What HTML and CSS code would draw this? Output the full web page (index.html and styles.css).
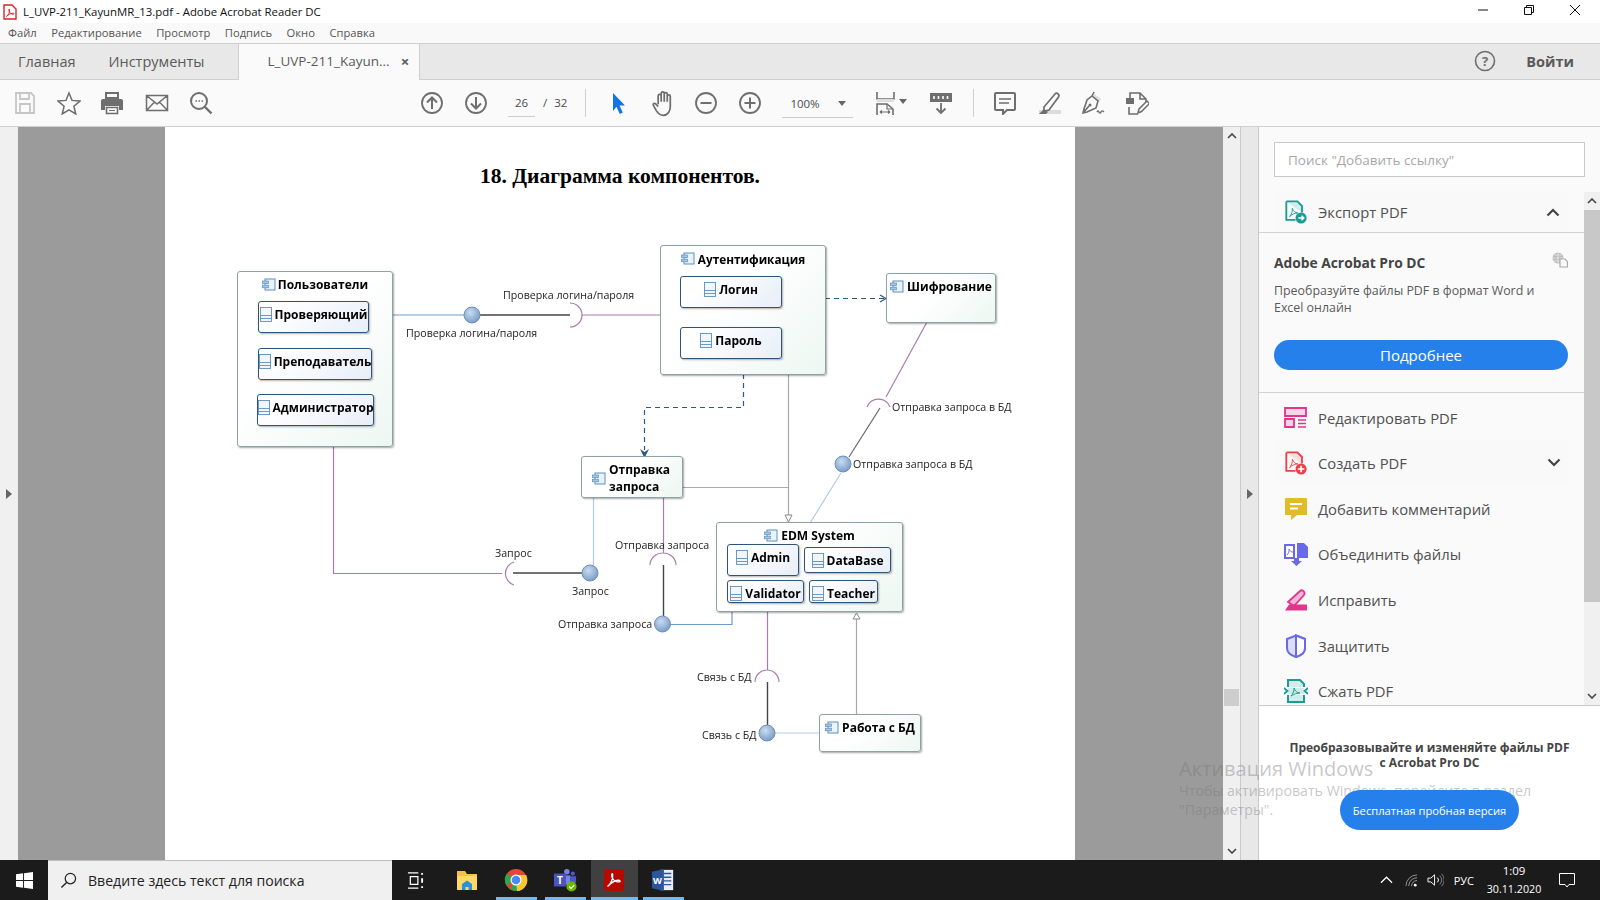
FILE: index.html
```html
<!DOCTYPE html>
<html lang="ru">
<head>
    <meta charset="UTF-8">
    <title>L_UVP-211_KayunMR_13.pdf - Adobe Acrobat Reader DC</title>
    <link rel="stylesheet" href="styles.css">
</head>
<body>
    <svg class="defs" width="0" height="0">
        <defs>
            <symbol id="comp" viewBox="0 0 14 13">
                <rect x="3" y="1" width="10" height="11" fill="#eaf2fa" stroke="#5d90c0"/>
                <rect x="0.5" y="3" width="6" height="2.6" fill="#a9c7e3" stroke="#5d90c0" stroke-width=".7"/>
                <rect x="0.5" y="7.2" width="6" height="2.6" fill="#a9c7e3" stroke="#5d90c0" stroke-width=".7"/>
            </symbol>
            <symbol id="cls" viewBox="0 0 12 15">
                <rect x="0.5" y="0.5" width="11" height="14" fill="#f2f6fb" stroke="#5c8fc2" stroke-width=".9"/>
                <path d="M.5 8.5h11M.5 11.5h11" stroke="#5c8fc2" stroke-width=".9" fill="none"/>
            </symbol>
            <radialGradient id="ball" cx=".4" cy=".35" r=".75">
                <stop offset="0" stop-color="#cbdcef"/>
                <stop offset="1" stop-color="#6d94c3"/>
            </radialGradient>
        </defs>
    </svg>

    <div class="titlebar">
        <svg class="title-icon" viewBox="0 0 14 16"><path d="M1 1h8l4 4v10H1z" fill="#fff" stroke="#d8232a" stroke-width="1.4"/><path d="M3.5 12.5c2-1.5 3.500-4.5 3-7-.3-1.2-1 0-.5 1.5.7 2 2.500 3.500 4.500 3.200 1-.3.3-1.200-1-1-2.500.2-4.500 1.800-6 3.300z" fill="none" stroke="#d8232a"/></svg>
        <span class="title-text">L_UVP-211_KayunMR_13.pdf - Adobe Acrobat Reader DC</span>
        <div class="win-btns">
            <svg class="win-btn" viewBox="0 0 12 12"><path d="M1 6h10" stroke="#111"/></svg>
            <svg class="win-btn" viewBox="0 0 12 12"><path d="M1.5 3.5h7v7h-7zM3.5 3.5v-2h7v7h-2" fill="none" stroke="#111"/></svg>
            <svg class="win-btn" viewBox="0 0 12 12"><path d="M1 1l10 10M11 1L1 11" stroke="#111"/></svg>
        </div>
    </div>

    <div class="menubar">
        <span>Файл</span>
        <span>Редактирование</span>
        <span>Просмотр</span>
        <span>Подпись</span>
        <span>Окно</span>
        <span>Справка</span>
    </div>

    <div class="tabbar">
        <span class="tab-home">Главная</span>
        <span class="tab-tools">Инструменты</span>
        <div class="tab-doc">
            <span>L_UVP-211_Kayun...</span>
            <span class="tab-close">×</span>
        </div>
        <svg class="help-icon" viewBox="0 0 22 22"><circle cx="11" cy="11" r="9.5" fill="none" stroke="#6e6e6e" stroke-width="1.6"/><text x="11" y="15.5" text-anchor="middle" class="help-mark">?</text></svg>
        <span class="login">Войти</span>
    </div>

    <div class="toolbar">
        <button class="tb-btn tb-first"><svg viewBox="0 0 24 24"><path d="M3 2h15l3 3v17H3zM7 2v6h9V2M7 22v-9h10v9" fill="none" stroke="#c6c6c6" stroke-width="1.8"/></svg></button>
        <button class="tb-btn"><svg viewBox="0 0 24 24"><path d="M12 2l3 7.4 8 .6-6.1 5.200 1.900 7.800L12 18.800 5.200 23l1.900-7.800L1 10l8-.6z" fill="none" stroke="#6e6e6e" stroke-width="1.5"/></svg></button>
        <button class="tb-btn tb-print"><svg viewBox="0 0 24 24"><path d="M6 2h12v5H6z" fill="none" stroke="#6e6e6e" stroke-width="2"/><path d="M3 8h18a2 2 0 0 1 2 2v9h-4v-4H5v4H1v-9a2 2 0 0 1 2-2z" fill="#6e6e6e"/><path d="M6.500 16.500h11v6h-11z" fill="none" stroke="#6e6e6e" stroke-width="1.6"/><path d="M9 19.500h6" stroke="#6e6e6e"/></svg></button>
        <button class="tb-btn"><svg viewBox="0 0 24 24"><path d="M1.500 4.500h21v15h-21zM1.500 4.500L12 13l10.500-8.500M1.500 19.500l8-8.500M22.500 19.500l-8-8.500" fill="none" stroke="#6e6e6e" stroke-width="1.5"/></svg></button>
        <button class="tb-btn"><svg viewBox="0 0 24 24"><circle cx="10" cy="10" r="8" fill="none" stroke="#6e6e6e" stroke-width="2"/><path d="M16 16l6.500 6.500" stroke="#6e6e6e" stroke-width="2.4"/><path d="M6.500 10h1.500M9.500 10H11M12.500 10H14" stroke="#6e6e6e" stroke-width="1.6"/></svg></button>

        <button class="tb-btn tb-nav"><svg viewBox="0 0 24 24"><circle cx="12" cy="12" r="10" fill="none" stroke="#6e6e6e" stroke-width="1.8"/><path d="M12 18V6.500M7 11.500l5-5 5 5" fill="none" stroke="#6e6e6e" stroke-width="2"/></svg></button>
        <button class="tb-btn"><svg viewBox="0 0 24 24"><circle cx="12" cy="12" r="10" fill="none" stroke="#6e6e6e" stroke-width="1.8"/><path d="M12 6v11.500M7 12.500l5 5 5-5" fill="none" stroke="#6e6e6e" stroke-width="2"/></svg></button>
        <span class="page-num">26</span>
        <span class="page-of">/</span>
        <span class="page-total">32</span>
        <span class="tb-sep tb-sep-a"></span>

        <button class="tb-btn tb-cursor"><svg viewBox="0 0 24 24"><path d="M7 2l12 12.500h-5.500l3.300 7-3 1.500-3.300-7.200L7 20z" fill="#1473e6"/></svg></button>
        <button class="tb-btn tb-hand"><svg viewBox="0 0 24 24"><path d="M7 13V6a1.300 1.300 0 0 1 2.600 0v5M9.600 11V3.800a1.300 1.300 0 0 1 2.600 0V11M12.200 11V4.400a1.300 1.300 0 0 1 2.600 0V11M14.800 11V6.400a1.300 1.300 0 0 1 2.600 0V15c0 4.500-2.500 7.500-6 7.500-3 0-4.500-1.500-6-4L2.900 14c-.7-1.300 1-2.300 2-1.200L7 15" fill="none" stroke="#6e6e6e" stroke-width="1.5"/></svg></button>
        <button class="tb-btn"><svg viewBox="0 0 24 24"><circle cx="12" cy="12" r="10" fill="none" stroke="#6e6e6e" stroke-width="1.8"/><path d="M6.500 12h11" stroke="#6e6e6e" stroke-width="2"/></svg></button>
        <button class="tb-btn"><svg viewBox="0 0 24 24"><circle cx="12" cy="12" r="10" fill="none" stroke="#6e6e6e" stroke-width="1.8"/><path d="M6.500 12h11M12 6.500v11" stroke="#6e6e6e" stroke-width="2"/></svg></button>
        <div class="zoom-select">
            <span>100%</span>
            <span class="caret"></span>
        </div>

        <button class="tb-btn tb-fit"><svg viewBox="0 0 24 24"><path d="M1 1v7h17V1" fill="none" stroke="#6e6e6e" stroke-width="1.6"/><path d="M1 8h17v3H1z" fill="#ddd"/><path d="M1 24V13h10l6 5v6" fill="none" stroke="#6e6e6e" stroke-width="1.6"/><path d="M11 13v5h6M4 21h10M4 21l2-1.500M4 21l2 1.500M14 21l-2-1.500M14 21l-2 1.500" fill="none" stroke="#6e6e6e" stroke-width="1.2"/></svg><span class="caret caret-fit"></span></button>
        <button class="tb-btn tb-read"><svg viewBox="0 0 24 24"><path d="M1 2h22v9H1z" fill="#6e6e6e"/><path d="M5 5v3M9.500 5v3M14 5v3M18.500 5v3" stroke="#fff" stroke-width="1.6"/><path d="M12 12v10M7.500 17.500l4.500 4.500 4.500-4.500" fill="none" stroke="#6e6e6e" stroke-width="1.8"/></svg></button>
        <span class="tb-sep tb-sep-b"></span>

        <button class="tb-btn tb-comment"><svg viewBox="0 0 24 24"><path d="M3 2h18a1 1 0 0 1 1 1v15a1 1 0 0 1-1 1h-7l-4 4v-4H3a1 1 0 0 1-1-1V3a1 1 0 0 1 1-1z" fill="none" stroke="#6e6e6e" stroke-width="2"/><path d="M6 8h12M6 12h10" stroke="#6e6e6e" stroke-width="1.5"/></svg></button>
        <button class="tb-btn"><svg viewBox="0 0 24 24"><path d="M2 19h22v4H2z" fill="#dcdcdc"/><path d="M7 16L18 3c2-2 5 .5 3.500 3L12 19l-5 1z" fill="none" stroke="#6e6e6e" stroke-width="1.7"/><path d="M2 23l5-5 4 3-2 2z" fill="#6e6e6e"/></svg></button>
        <button class="tb-btn"><svg viewBox="0 0 24 24"><path d="M13 3l7 5-2 3-7-5z" fill="#dcdcdc"/><path d="M11 5l6 5-2 7-9 4-4 1 1-4 3-9zM2 22l6-7M13 1l-2 4" fill="none" stroke="#6e6e6e" stroke-width="1.6"/><circle cx="9" cy="14" r="1.500" fill="#6e6e6e"/><path d="M16 21c1-1.500 1.500-1.500 2 0s1.500 1.500 2 0 1.500-1.500 3 0" fill="none" stroke="#6e6e6e" stroke-width="1.4"/></svg></button>
        <button class="tb-btn"><svg viewBox="0 0 24 24"><path d="M1 7h8v6H1z" fill="#6e6e6e"/><path d="M5 7V2h10l6 6v4M15 2v6h6M4 16v7h9" fill="none" stroke="#6e6e6e" stroke-width="1.6"/><path d="M13 22l1-4 8-8 2.500 2.500-8 8z" fill="#fafafa" stroke="#6e6e6e" stroke-width="1.5"/></svg></button>
    </div>

    <div class="main">
        <div class="side-strip"><span class="arrow-right"></span></div>

        <div class="viewer">
            <div class="page">
                <h1 class="page-title">18. Диаграмма компонентов.</h1>
                <div class="diagram">
                    <svg class="wires" viewBox="0 0 800 530" width="800" height="530">
                        <g transform="translate(-225,-240)" fill="none">
                            <path class="w-blue" d="M393 315H465M670 624.500H732V612"/>
                            <path class="w-blue-light" d="M593.500 498V566M841 473L810 523M775 733H819"/>
                            <path class="w-black" d="M480 315H570M513 573H583M663.500 565V616M767.500 682V725"/>
                            <path class="w-black-thin" d="M880 408L849 457"/>
                            <path class="w-magenta" d="M570 303A12 12 0 0 1 570 327M582 315H661M333.500 447V573.500H502M514 562A12 12 0 0 0 514 585M663.500 498V553M650 565A13 12 0 0 1 676 565M767.500 612V670M755 682A12 12 0 0 1 779 682"/>
                            <path class="w-magenta" d="M927 322L886 397M867 407A12 11 0 0 1 890 407"/>
                            <path class="w-grey" d="M788.500 374V515M683 487.500H788M856.500 714V619"/>
                            <path class="w-grey-tip" d="M785 515L788.500 522L792 515ZM853 619L856.500 613L860 619Z"/>
                            <path class="w-dash" d="M825 298.500H886M743.500 374V407.500H644.500V450"/>
                            <path class="w-dash-tip" d="M880 295L886 298.500L880 302"/>
                            <path class="w-dash-fill" d="M640 449L644.500 452L649 449L644.500 458Z"/>
                            <circle class="ball" cx="472" cy="315" r="8"/>
                            <circle class="ball" cx="590" cy="573" r="8"/>
                            <circle class="ball" cx="662.500" cy="624" r="8"/>
                            <circle class="ball" cx="843" cy="464" r="8"/>
                            <circle class="ball" cx="767" cy="733" r="8"/>
                        </g>
                    </svg>

                    <div class="node n-users"><svg class="i-comp"><use href="#comp"/></svg><span>Пользователи</span></div>
                    <div class="part p-checker"><svg class="i-cls"><use href="#cls"/></svg><span>Проверяющий</span></div>
                    <div class="part p-teacher"><svg class="i-cls"><use href="#cls"/></svg><span>Преподаватель</span></div>
                    <div class="part p-admin"><svg class="i-cls"><use href="#cls"/></svg><span>Администратор</span></div>

                    <div class="node n-auth"><svg class="i-comp"><use href="#comp"/></svg><span>Аутентификация</span></div>
                    <div class="part p-login"><svg class="i-cls"><use href="#cls"/></svg><span>Логин</span></div>
                    <div class="part p-pass"><svg class="i-cls"><use href="#cls"/></svg><span>Пароль</span></div>

                    <div class="node n-crypt"><svg class="i-comp"><use href="#comp"/></svg><span>Шифрование</span></div>

                    <div class="node n-send"><svg class="i-comp"><use href="#comp"/></svg><span>Отправка<br>запроса</span></div>

                    <div class="node n-edm"><svg class="i-comp"><use href="#comp"/></svg><span>EDM System</span></div>
                    <div class="part p-eadmin"><svg class="i-cls"><use href="#cls"/></svg><span>Admin</span></div>
                    <div class="part p-db"><svg class="i-cls"><use href="#cls"/></svg><span>DataBase</span></div>
                    <div class="part p-valid"><svg class="i-cls"><use href="#cls"/></svg><span>Validator</span></div>
                    <div class="part p-eteach"><svg class="i-cls"><use href="#cls"/></svg><span>Teacher</span></div>

                    <div class="node n-work"><svg class="i-comp"><use href="#comp"/></svg><span>Работа с БД</span></div>

                    <span class="lbl l-check-a">Проверка логина/пароля</span>
                    <span class="lbl l-check-b">Проверка логина/пароля</span>
                    <span class="lbl l-send-db-a">Отправка запроса в БД</span>
                    <span class="lbl l-send-db-b">Отправка запроса в БД</span>
                    <span class="lbl l-req-a">Запрос</span>
                    <span class="lbl l-req-b">Запрос</span>
                    <span class="lbl l-send-a">Отправка запроса</span>
                    <span class="lbl l-send-b">Отправка запроса</span>
                    <span class="lbl l-link-a">Связь с БД</span>
                    <span class="lbl l-link-b">Связь с БД</span>
                </div>
            </div>
        </div>

        <div class="v-scroll">
            <svg class="chev" viewBox="0 0 10 6"><path d="M1 5l4-4 4 4" fill="none" stroke="#444" stroke-width="1.6"/></svg>
            <div class="v-track"><div class="v-thumb"></div></div>
            <svg class="chev" viewBox="0 0 10 6"><path d="M1 1l4 4 4-4" fill="none" stroke="#444" stroke-width="1.6"/></svg>
        </div>

        <div class="side-strip panel-strip"><span class="arrow-right"></span></div>

        <div class="panel">
            <div class="panel-search">
                <div class="search-box">Поиск "Добавить ссылку"</div>
            </div>

            <div class="panel-body">
                <div class="panel-scroll">
                    <div class="tool-row tool-head">
                        <svg class="tool-icon" viewBox="0 0 24 26"><path d="M1.500 1.500h12l5 5v7" fill="#d3ecea" stroke="#1a9c95" stroke-width="2"/><path d="M1.500 1.500v20h10" fill="none" stroke="#1a9c95" stroke-width="2"/><path d="M5 18c2-2 3.500-6 3-9 1 3 3 5 6 5-3 0-6 1.500-9 4z" fill="none" stroke="#1a9c95"/><circle cx="17.500" cy="19.500" r="6" fill="#1a9c95"/><path d="M14.500 19.500h5.500M18 17l2.500 2.500-2.500 2.500" fill="none" stroke="#fff" stroke-width="1.5"/></svg>
                        <span>Экспорт PDF</span>
                        <svg class="tool-chev" viewBox="0 0 14 9"><path d="M1.500 7.500L7 2l5.500 5.500" fill="none" stroke="#444" stroke-width="2.2"/></svg>
                    </div>

                    <div class="product">
                        <div class="product-head">
                            <h3>Adobe Acrobat Pro DC</h3>
                            <svg class="globe" viewBox="0 0 16 16"><circle cx="6" cy="6" r="5.500" fill="#bdbdbd"/><path d="M.5 6h11M6 .5v11M2 3h8M2 9h8" stroke="#eee" stroke-width=".7"/><path d="M8 7h5l2.500 2.500V15H8z" fill="#fafafa" stroke="#aaa" stroke-width="1.2"/></svg>
                        </div>
                        <p>Преобразуйте файлы PDF в формат Word и<br>Excel онлайн</p>
                        <button class="btn-more">Подробнее</button>
                    </div>

                    <div class="tool-list">
                        <div class="tool-row tool-first">
                            <svg class="tool-icon" viewBox="0 0 24 24"><path d="M1 2h21v8H1z" fill="#f7d5e6" stroke="#e0368c" stroke-width="1.8"/><path d="M1 13h9v8H1z" fill="#f7d5e6" stroke="#e0368c" stroke-width="1.8"/><path d="M14 14h8M14 17.500h8M14 21h8" stroke="#e0368c" stroke-width="1.3"/></svg>
                            <span>Редактировать PDF</span>
                        </div>
                        <div class="tool-row tool-open">
                            <svg class="tool-icon" viewBox="0 0 24 26"><path d="M1.500 1.500h12l5 5v7" fill="#fbdcdc" stroke="#e8424a" stroke-width="2"/><path d="M1.500 1.500v20h10" fill="none" stroke="#e8424a" stroke-width="2"/><path d="M5 18c2-2 3.500-6 3-9 1 3 3 5 6 5-3 0-6 1.500-9 4z" fill="none" stroke="#e8424a"/><circle cx="17.500" cy="19.500" r="6" fill="#e8424a"/><path d="M14 19.500h7M17.500 16v7" stroke="#fff" stroke-width="1.8"/></svg>
                            <span>Создать PDF</span>
                            <svg class="tool-chev" viewBox="0 0 14 9"><path d="M1.500 1.500L7 7l5.500-5.500" fill="none" stroke="#444" stroke-width="2.2"/></svg>
                        </div>
                        <div class="tool-row">
                            <svg class="tool-icon" viewBox="0 0 24 24"><path d="M2 1h20a1 1 0 0 1 1 1v15a1 1 0 0 1-1 1H13l-6 5v-5H2a1 1 0 0 1-1-1V2a1 1 0 0 1 1-1z" fill="#e1bb2c"/><path d="M6 7h12M6 11.500h8" stroke="#fff" stroke-width="2"/></svg>
                            <span>Добавить комментарий</span>
                        </div>
                        <div class="tool-row">
                            <svg class="tool-icon" viewBox="0 0 24 24"><path d="M1 3h9v13H1z" fill="#fff" stroke="#6a6ae8" stroke-width="2"/><path d="M3 13c1.500-1.500 2.500-4 2-6 1 2 2 3 4 3" fill="none" stroke="#6a6ae8"/><path d="M13 1h7l4 4v11H13z" fill="#6a6ae8"/><path d="M10 16h5v3h3l-5.500 5L7 19h3z" fill="#6a6ae8"/></svg>
                            <span>Объединить файлы</span>
                        </div>
                        <div class="tool-row">
                            <svg class="tool-icon" viewBox="0 0 24 24"><path d="M4 14L16 3c2-2 6 1 4 4L10 18z" fill="#f2b5d5" stroke="#e0368c" stroke-width="1.8"/><path d="M1 22.500l4-6h18v6z" fill="#e0368c"/></svg>
                            <span>Исправить</span>
                        </div>
                        <div class="tool-row">
                            <svg class="tool-icon" viewBox="0 0 24 24"><path d="M12 1.500l9 3.500v9c0 4.500-4 7.500-9 9-5-1.500-9-4.500-9-9V5z" fill="#dcdcfb" stroke="#6a6ae8" stroke-width="2"/><path d="M12 1.500l9 3.500v9c0 4.500-4 7.500-9 9z" fill="#fff" stroke="#6a6ae8" stroke-width="2"/></svg>
                            <span>Защитить</span>
                        </div>
                        <div class="tool-row">
                            <svg class="tool-icon" viewBox="0 0 24 24"><path d="M4 8V1h12l4 4v3M20 16v7H4v-7" fill="#d3ecea" stroke="#1a9c95" stroke-width="2"/><path d="M4 9h16v6H4z" fill="#d3ecea"/><path d="M7 17c2-2 3.500-6 3-8 1 3 3 5 6 5-3 0-6 1-9 3z" fill="none" stroke="#1a9c95"/><path d="M0 9l3.500 3L0 15M24 9l-3.500 3L24 15" fill="none" stroke="#1a9c95" stroke-width="1.8"/></svg>
                            <span>Сжать PDF</span>
                        </div>
                    </div>
                </div>

                <div class="panel-bar">
                    <svg class="chev" viewBox="0 0 10 6"><path d="M1 5l4-4 4 4" fill="none" stroke="#444" stroke-width="1.6"/></svg>
                    <div class="panel-track"><div class="panel-thumb"></div></div>
                    <svg class="chev" viewBox="0 0 10 6"><path d="M1 1l4 4 4-4" fill="none" stroke="#444" stroke-width="1.6"/></svg>
                </div>
            </div>

            <div class="panel-promo">
                <h4>Преобразовывайте и изменяйте файлы PDF<br>с Acrobat Pro DC</h4>
                <button class="btn-trial">Бесплатная пробная версия</button>
            </div>
        </div>
    </div>

    <div class="taskbar">
        <div class="start-btn">
            <svg viewBox="0 0 18 18"><path d="M0 2.500L7.500 1.400v7.100H0zM8.500 1.300L18 0v8.500H8.500zM0 9.500h7.500v7.100L0 15.500zM8.500 9.500H18V18l-9.500-1.300z" fill="#fff"/></svg>
        </div>
        <div class="task-search">
            <svg viewBox="0 0 18 18"><circle cx="11" cy="7" r="5.500" fill="none" stroke="#222" stroke-width="1.3"/><path d="M7 11l-5.500 5.500" stroke="#222" stroke-width="1.5"/></svg>
            <span>Введите здесь текст для поиска</span>
        </div>
        <div class="task-app task-view">
            <svg viewBox="0 0 18 18"><path d="M1 1h11M1 17h11M3.500 5h8v8h-8z" fill="none" stroke="#fff" stroke-width="1.3"/><path d="M15 1h2v2h-2zM15 6.500h2v5h-2zM15 15h2v2h-2z" fill="#fff"/></svg>
        </div>
        <div class="task-app task-files">
            <svg viewBox="0 0 24 24"><path d="M2 3h8l2 3h10v16H2z" fill="#f3c24c"/><path d="M2 8h20v14H2z" fill="#ffd966"/><path d="M7 22v-6l5-3.500 5 3.500v6z" fill="#2a90d8"/><path d="M10.500 22v-3h3v3z" fill="#ffd966"/></svg>
        </div>
        <div class="task-app task-open">
            <svg viewBox="0 0 24 24"><circle cx="12" cy="12" r="11" fill="#e5463a"/><path d="M12 12L22.500 15A11 11 0 0 1 6 21.300z" fill="#2fa64c"/><path d="M12 12L2.500 17.500A11 11 0 0 1 3 5.500z" fill="#2fa64c"/><path d="M12 7h10.200A11 11 0 0 1 13 23z" fill="#fbc52d"/><circle cx="12" cy="12" r="5.500" fill="#fff"/><circle cx="12" cy="12" r="4.300" fill="#4a8af4"/></svg>
        </div>
        <div class="task-app task-open">
            <svg viewBox="0 0 26 26"><circle cx="15" cy="4" r="3" fill="#7b83eb"/><circle cx="21.500" cy="6" r="2.300" fill="#5059c9"/><path d="M11 8h8v10h-8z" fill="#7b83eb"/><path d="M19 9h6v7h-6z" fill="#5059c9"/><path d="M1 6h13v14H1z" fill="#4b53bc"/><text x="7.500" y="17" text-anchor="middle" class="teams-t">T</text><circle cx="20" cy="20" r="5.500" fill="#6bb700"/><path d="M17.500 20l2 2 3.500-3.500" fill="none" stroke="#fff" stroke-width="1.3"/></svg>
        </div>
        <div class="task-app task-open task-active">
            <svg viewBox="0 0 24 26"><rect x="1" y="1" width="22" height="24" rx="3" fill="#b30b00"/><path d="M5 20c3.500-2.500 6-8.500 5.500-13-.4-2-1.500 0-.8 2.500 1.100 3.500 4.300 6 8 5.500 1.800-.5.600-2-1.700-1.700-4 .4-7.500 3.200-11 6.700z" fill="none" stroke="#fff" stroke-width="1.5"/></svg>
        </div>
        <div class="task-app task-open">
            <svg viewBox="0 0 26 26"><path d="M10 2h14v22H10z" fill="#e8eef8"/><path d="M14 6h8M14 10h8M14 14h8M14 18h8" stroke="#2b579a" stroke-width="1.5"/><path d="M1 4l13-3v24L1 22z" fill="#2b579a"/><text x="7" y="17" text-anchor="middle" class="word-t">W</text></svg>
        </div>

        <div class="tray">
            <svg class="tray-chev" viewBox="0 0 14 8"><path d="M1 7l6-6 6 6" fill="none" stroke="#fff" stroke-width="1.3"/></svg>
            <svg class="tray-wifi" viewBox="0 0 14 14"><path d="M1 13a12 12 0 0 1 12-12M4 13a9 9 0 0 1 9-9M7 13a6 6 0 0 1 6-6" fill="none" stroke="#999" stroke-width="1"/><circle cx="11" cy="12" r="1.500" fill="#fff"/></svg>
            <svg class="tray-sound" viewBox="0 0 18 14"><path d="M1 5h3l4-3.500v11L4 9H1z" fill="none" stroke="#fff"/><path d="M11 4.500a3.500 3.500 0 0 1 0 5" fill="none" stroke="#fff"/><path d="M13.500 2.500a6 6 0 0 1 0 9M15.500 .5a9 9 0 0 1 0 13" fill="none" stroke="#888"/></svg>
            <span class="tray-lang">РУС</span>
            <div class="tray-clock">
                <span class="tray-time">1:09</span>
                <span>30.11.2020</span>
            </div>
            <svg class="tray-note" viewBox="0 0 16 15"><path d="M.5.500h15v11H10L8 14l-2-2.500H.5z" fill="none" stroke="#fff"/></svg>
        </div>
    </div>

    <div class="activate">
        <div class="activate-head">Активация Windows</div>
        <div class="activate-sub">Чтобы активировать Windows, перейдите в раздел<br>"Параметры".</div>
    </div>
</body>
</html>
```

FILE: styles.css
```css
* {
    box-sizing: border-box;
}

html, body {
    margin: 0;
    height: 100%;
}

body {
    width: 1600px;
    height: 900px;
    overflow: hidden;
    position: relative;
    display: flex;
    flex-direction: column;
    font-family: "Open Sans", "Noto Sans", sans-serif;
    color: #4b4b4b;
    background: #fafafa;
}

button {
    font-family: inherit;
    border: none;
    background: none;
    padding: 0;
}

.defs {
    position: absolute;
}

/* title + menu */
.titlebar {
    height: 23px;
    background: #fff;
    display: flex;
    align-items: center;
    flex-shrink: 0;
}

.title-icon {
    width: 14px;
    height: 16px;
    margin-left: 3px;
}

.title-text {
    margin-left: 6px;
    font-size: 11.4px;
    color: #111;
}

.win-btns {
    margin-left: auto;
    display: flex;
    margin-top: -3px;
    padding-right: 19px;
    gap: 34px;
}

.win-btn {
    width: 12px;
    height: 12px;
}

.menubar {
    height: 21px;
    background: #f9f9f9;
    border-bottom: 1px solid #cfcfcf;
    display: flex;
    align-items: center;
    gap: 14.5px;
    padding-left: 8px;
    padding-bottom: 2px;
    font-size: 11.2px;
    color: #555;
    flex-shrink: 0;
}

/* tabs */
.tabbar {
    height: 36px;
    background: #e8e8e8;
    border-bottom: 1px solid #cfcfcf;
    display: flex;
    align-items: center;
    padding-bottom: 1px;
    font-size: 14.5px;
    color: #5a5a5a;
    flex-shrink: 0;
}

.tab-home {
    margin-left: 18px;
}

.tab-tools {
    margin-left: 33px;
}

.tab-doc {
    margin-left: 33px;
    width: 182px;
    height: 36px;
    background: #fafafa;
    border-left: 1px solid #cfcfcf;
    border-right: 1px solid #cfcfcf;
    display: flex;
    align-items: center;
    padding-left: 29px;
    padding-bottom: 2px;
    font-size: 13.5px;
    position: relative;
    top: 1px;
}

.tab-close {
    margin-left: 11px;
    font-weight: 700;
    font-size: 15px;
}

.help-icon {
    width: 22px;
    height: 22px;
    margin-left: auto;
    margin-right: 1px;
}

.help-mark {
    font-size: 13px;
    font-weight: 700;
    fill: #6e6e6e;
}

.login {
    margin-left: 29px;
    margin-right: 26px;
    font-weight: 700;
}

/* toolbar */
.toolbar {
    height: 47px;
    background: #fafafa;
    border-bottom: 1px solid #cfcfcf;
    display: flex;
    align-items: center;
    flex-shrink: 0;
    padding-bottom: 1px;
}

.tb-btn {
    width: 44px;
    height: 26px;
    display: flex;
    align-items: center;
    justify-content: center;
    flex-shrink: 0;
    position: relative;
}

.tb-btn svg {
    width: 24px;
    height: 24px;
}

.tb-first {
    margin-left: 3px;
}

.tb-print {
    margin-left: -1px;
    margin-right: 1px;
}

.tb-nav {
    margin-left: 187px;
}

.page-num {
    margin-left: 10px;
    width: 27px;
    text-align: center;
    font-size: 11.5px;
    border-bottom: 1px solid #ccc;
    line-height: 26px;
    margin-top: 2px;
}

.page-of {
    margin-left: 8px;
    font-size: 11.5px;
}

.page-total {
    margin-left: 7px;
    font-size: 11.5px;
}

.tb-sep {
    width: 1px;
    height: 28px;
    background: #cfcfcf;
}

.tb-sep-a {
    margin-left: 18px;
}

.tb-cursor {
    margin-left: 10px;
}

.tb-btn.tb-hand svg {
    width: 28px;
    height: 28px;
    margin-left: 3px;
}

.zoom-select {
    margin-left: 10px;
    width: 71px;
    height: 28px;
    margin-top: 2px;
    border-bottom: 1px solid #ccc;
    display: flex;
    align-items: center;
    padding-left: 8px;
    font-size: 11.5px;
}

.caret {
    width: 0;
    height: 0;
    border-left: 4px solid transparent;
    border-right: 4px solid transparent;
    border-top: 5px solid #666;
    margin-left: 18px;
}

.caret-fit {
    position: absolute;
    left: 33px;
    top: 9px;
    margin: 0;
}

.tb-fit {
    margin-left: 13px;
}

.tb-read {
    margin-left: 9px;
}

.tb-sep-b {
    margin-left: 10px;
}

.tb-comment {
    margin-left: 9px;
}

/* main area */
.main {
    height: 733px;
    display: flex;
    flex-shrink: 0;
}

.side-strip {
    width: 18px;
    background: #f0f0f0;
    display: flex;
    align-items: center;
    justify-content: center;
    flex-shrink: 0;
}

.panel-strip {
    background: #e8e8e8;
    border-left: 1px solid #c9c9c9;
    border-right: 1px solid #c9c9c9;
    width: 19px;
}

.arrow-right {
    width: 0;
    height: 0;
    border-top: 5px solid transparent;
    border-bottom: 5px solid transparent;
    border-left: 6px solid #666;
}

.viewer {
    width: 1205px;
    background: #9b9b9b;
    padding-left: 147px;
    flex-shrink: 0;
    overflow: hidden;
}

.page {
    width: 910px;
    height: 100%;
    background: #fff;
    padding-top: 37px;
    overflow: hidden;
}

.page-title {
    margin: 0;
    font-family: "Liberation Serif", serif;
    font-weight: 700;
    font-size: 21.5px;
    line-height: 24px;
    text-align: center;
    color: #000;
}

.diagram {
    position: relative;
    width: 800px;
    height: 530px;
    margin-left: 60px;
    margin-top: 52px;
    font-family: "Open Sans", sans-serif;
    color: #000;
    filter: blur(.3px);
}

.wires {
    position: absolute;
    left: 0;
    top: 0;
}

.w-blue, .w-blue-light, .w-black, .w-black-thin, .w-magenta, .w-grey, .w-dash, .w-dash-tip {
    stroke-width: 1.2;
}

.w-blue {
    stroke: #6d9bcf;
}

.w-blue-light {
    stroke: #b3cbe0;
}

.w-black {
    stroke: #444;
    stroke-width: 1.4;
}

.w-black-thin {
    stroke: #666;
}

.w-magenta {
    stroke: #a97ca9;
}

.w-grey {
    stroke: #aaa;
}

.w-grey-tip {
    fill: #fff;
    stroke: #888;
}

.w-dash {
    stroke: #2d5a80;
    stroke-dasharray: 5 4;
}

.w-dash-tip {
    stroke: #2d5a80;
}

.w-dash-fill {
    fill: #2d5a80;
}

.ball {
    fill: url(#ball);
    stroke: #6e90b8;
}

.node, .part {
    position: absolute;
    display: flex;
    justify-content: center;
    align-items: flex-start;
    gap: 3px;
    padding-top: 5px;
    font-size: 12px;
    font-weight: 700;
    line-height: 16px;
    white-space: nowrap;
}

.node {
    background: linear-gradient(135deg, #fff 40%, #edf7f2);
    border: 1px solid #8ca3a3;
    border-radius: 3px;
    box-shadow: 1px 1px 2px rgba(0, 0, 0, .35);
}

.part {
    background: linear-gradient(135deg, #fff 20%, #e8eef8);
    border: 1px solid #2f5478;
    border-radius: 3px;
    box-shadow: 1px 1px 2px rgba(0, 0, 0, .3);
}

.i-comp {
    width: 14px;
    height: 13px;
    flex-shrink: 0;
    margin-top: 1px;
}

.i-cls {
    width: 12px;
    height: 15px;
    flex-shrink: 0;
}

.n-users {
    left: 12px;
    top: 31px;
    width: 156px;
    height: 176px;
    padding-top: 4.5px;
    gap: 2px;
}

.p-checker {
    left: 33px;
    top: 61px;
    width: 111px;
    height: 32px;
}

.p-teacher {
    left: 33px;
    top: 108px;
    width: 114px;
    height: 32px;
}

.p-admin {
    left: 32px;
    top: 154px;
    width: 117px;
    height: 32px;
}

.n-auth {
    left: 435px;
    top: 5px;
    width: 166px;
    height: 130px;
    font-size: 11.8px;
}

.p-login {
    left: 455px;
    top: 36px;
    width: 102px;
    height: 32px;
}

.p-pass {
    left: 455px;
    top: 87px;
    width: 102px;
    height: 32px;
}

.n-crypt {
    left: 661px;
    top: 33px;
    width: 110px;
    height: 50px;
}

.n-send {
    left: 356px;
    top: 216px;
    width: 102px;
    height: 42px;
    align-items: center;
    padding-top: 2px;
    justify-content: flex-start;
    padding-left: 10px;
}

.n-send span {
    line-height: 17px;
}

.n-edm {
    left: 491px;
    top: 282px;
    width: 187px;
    height: 90px;
}

.p-eadmin {
    left: 502px;
    top: 304px;
    width: 72px;
    height: 32px;
}

.p-db {
    left: 579px;
    top: 307px;
    width: 87px;
    height: 26px;
}

.p-valid {
    left: 502px;
    top: 340px;
    width: 77px;
    height: 23px;
    padding-top: 5px;
}

.p-eteach {
    left: 584px;
    top: 340px;
    width: 69px;
    height: 23px;
    padding-top: 5px;
}

.n-work {
    left: 594px;
    top: 474px;
    width: 102px;
    height: 38px;
    padding-top: 5px;
}

.lbl {
    position: absolute;
    font-size: 10.65px;
    line-height: 14px;
    color: #222;
    white-space: nowrap;
}

.l-check-a {
    left: 278px;
    top: 48px;
}

.l-check-b {
    left: 181px;
    top: 86px;
}

.l-send-db-a {
    left: 667px;
    top: 160px;
}

.l-send-db-b {
    left: 628px;
    top: 217px;
}

.l-req-a {
    left: 270px;
    top: 306px;
}

.l-req-b {
    left: 347px;
    top: 344px;
}

.l-send-a {
    left: 390px;
    top: 298px;
}

.l-send-b {
    left: 333px;
    top: 377px;
}

.l-link-a {
    left: 472px;
    top: 430px;
}

.l-link-b {
    left: 477px;
    top: 488px;
}

/* viewer scrollbar */
.v-scroll {
    width: 17px;
    background: #f0f0f0;
    display: flex;
    flex-direction: column;
    align-items: center;
    flex-shrink: 0;
}

.chev {
    width: 10px;
    height: 6px;
    margin: 6px 0;
    flex-shrink: 0;
}

.v-track {
    flex: 1;
    width: 100%;
    padding-top: 544px;
}

.v-thumb {
    height: 17px;
    background: #cdcdcd;
    width: 15px;
    margin-left: 1px;
}

/* right panel */
.panel {
    width: 341px;
    background: #fff;
    display: flex;
    flex-direction: column;
    flex-shrink: 0;
}

.panel-search {
    height: 65px;
    padding: 15px 15px 0;
    background: #fafafa;
}

.search-box {
    height: 35px;
    background: #fff;
    border: 1px solid #c9c9c9;
    padding-left: 13px;
    font-size: 13.5px;
    line-height: 35px;
    color: #a8a8a8;
}

.panel-body {
    height: 514px;
    display: flex;
    background: #fafafa;
    border-bottom: 1px solid #c9c9c9;
}

.panel-scroll {
    width: 325px;
    overflow: hidden;
}

.tool-row {
    height: 45.7px;
    margin: 0 15px;
    padding-left: 10px;
    display: flex;
    align-items: center;
    gap: 10px;
    font-size: 14.8px;
    color: #505050;
}

.tool-head {
    height: 40px;
    background: #f9f9f9;
    margin-right: 16px;
}

.tool-first {
    height: 44px;
    margin-top: 3px;
}

.tool-icon {
    width: 24px;
    height: 24px;
    flex-shrink: 0;
}

.tool-chev {
    width: 14px;
    height: 9px;
    margin-left: auto;
    margin-right: 8.5px;
}

.tool-open {
    background: #f9f9f9;
}

.product {
    border-top: 1px solid #d4d4d4;
    border-bottom: 1px solid #d4d4d4;
    padding: 20px 15px 21px;
    height: 161px;
}

.product-head {
    display: flex;
    justify-content: space-between;
    width: 294px;
    align-items: center;
    height: 18px;
}

.product-head h3 {
    margin: 0;
    font-size: 13.8px;
    color: #444;
}

.globe {
    width: 16px;
    height: 16px;
    margin-top: -4px;
}

.product p {
    margin: 11px 0 24px;
    font-size: 12.4px;
    line-height: 17px;
    color: #5a5a5a;
}

.btn-more {
    width: 294px;
    height: 30px;
    border-radius: 15px;
    background: #2680eb;
    color: #fff;
    font-size: 15px;
    display: block;
}

.panel-bar {
    width: 16px;
    margin-left: auto;
    background: #f0f0f0;
    display: flex;
    flex-direction: column;
    align-items: center;
}

.panel-track {
    flex: 1;
    width: 100%;
}

.panel-thumb {
    height: 392px;
    background: #c8c8c8;
}

.panel-promo {
    flex: 1;
    display: flex;
    flex-direction: column;
    align-items: center;
    padding-top: 34px;
    background: #fff;
}

.panel-promo h4 {
    margin: 0 0 20px;
    font-size: 12px;
    line-height: 15px;
    text-align: center;
    color: #444;
}

.btn-trial {
    width: 179px;
    height: 40px;
    border-radius: 20px;
    background: #2680eb;
    color: #fff;
    font-size: 11.2px;
    position: relative;
    z-index: 2;
}

/* taskbar */
.taskbar {
    height: 40px;
    background: #1b1b1b;
    display: flex;
    flex-shrink: 0;
}

.start-btn {
    width: 48px;
    display: flex;
    align-items: center;
    justify-content: center;
}

.start-btn svg {
    width: 17px;
    height: 17px;
}

.task-search {
    width: 344px;
    background: #f0f0f0;
    border-top: 1px solid #bdbdbd;
    display: flex;
    align-items: center;
    padding-left: 12px;
    font-size: 14.1px;
    color: #222;
}

.task-search svg {
    width: 17px;
    height: 17px;
    flex-shrink: 0;
}

.task-search span {
    margin-left: 11px;
}

.task-app {
    width: 47px;
    display: flex;
    align-items: center;
    justify-content: center;
    flex-shrink: 0;
}

.task-app svg {
    width: 24px;
    height: 24px;
}

.task-view svg {
    width: 17px;
    height: 17px;
}

.task-files {
    margin-left: 4px;
    margin-right: 1.5px;
}

.task-open {
    border-bottom: 3px solid #76b9ed;
    padding-top: 3px;
    margin: 0 4px;
    width: 41px;
}

.task-active {
    background: #404040;
    width: 47px;
    margin: 0 1px;
}

.teams-t {
    font-size: 11px;
    font-weight: 700;
    fill: #fff;
}

.word-t {
    font-size: 10px;
    font-weight: 700;
    fill: #fff;
}

.tray {
    margin-left: auto;
    display: flex;
    align-items: center;
    color: #fff;
    font-size: 11px;
    padding-right: 25px;
}

.tray-chev {
    width: 13px;
    height: 8px;
}

.tray-wifi {
    width: 13px;
    height: 13px;
    margin-left: 12px;
}

.tray-sound {
    width: 17px;
    height: 14px;
    margin-left: 9px;
}

.tray-lang {
    margin-left: 10px;
}

.tray-clock {
    width: 60px;
    margin-left: 10px;
    display: flex;
    flex-direction: column;
    align-items: center;
    line-height: 18px;
    font-size: 10.7px;
}

.tray-time {
    font-size: 11.5px;
}

.tray-note {
    width: 16px;
    height: 15px;
    margin-left: 15px;
}

/* windows watermark sits over everything */
.activate {
    position: absolute;
    z-index: 1;
    left: 1179px;
    top: 756px;
    color: rgba(120, 120, 120, .42);
    pointer-events: none;
    white-space: nowrap;
}

.activate-head {
    font-size: 20px;
    line-height: 26px;
    margin-bottom: -1px;
}

.activate-sub {
    font-size: 14.15px;
    line-height: 19px;
}
```
